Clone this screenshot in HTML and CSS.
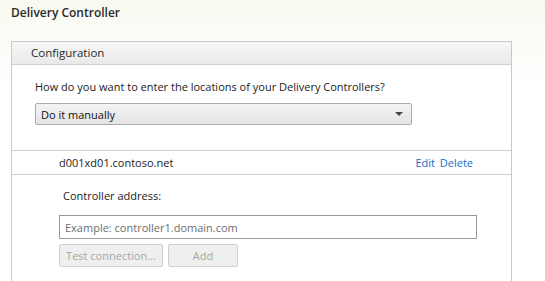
FILE: index.html
```html
<!DOCTYPE html>
<html lang="en">
<head>
  <meta charset="UTF-8">
  <meta name="viewport" content="width=device-width, initial-scale=1.0">
  <title>Delivery Controller</title>
  <link rel="stylesheet" href="styles.css">
</head>
<body>
  <h1 class="page-title">Delivery Controller</h1>

  <div class="panel">
    <div class="panel-header">Configuration</div>

    <div class="panel-body">
      <p class="question">How do you want to enter the locations of your Delivery Controllers?</p>
      <div class="select">
        <span>Do it manually</span>
        <span class="arrow"></span>
      </div>
    </div>

    <!-- Controllers already added -->
    <div class="controller-row">
      <span class="controller-name">d001xd01.contoso.net</span>
      <span class="actions">
        <a href="#">Edit</a>
        <a href="#">Delete</a>
      </span>
    </div>

    <div class="add-form">
      <label for="address">Controller address:</label>
      <input type="text" id="address" placeholder="Example: controller1.domain.com">
      <div class="buttons">
        <button class="btn btn-test" disabled>Test connection...</button>
        <button class="btn btn-add" disabled>Add</button>
      </div>
    </div>
  </div>
</body>
</html>
```

FILE: styles.css
```css
body {
  margin: 0;
  padding: 0;
  height: 281px;
  overflow: hidden;
  font-family: "Open Sans", "Noto Sans", sans-serif;
  font-size: 11px;
  color: #222;
  background: linear-gradient(to bottom, #f8faf1 0px, #fbfcf7 40px, #ffffff 90px);
}
.page-title {
  margin: 0;
  padding: 4px 0 0 11px;
  height: 37px;
  font-size: 12px;
  font-weight: 600;
  line-height: 18px;
  color: #2a2a2a;
}
.panel {
  margin-left: 11px;
  width: 499px;
  height: 240px;
  border: 1px solid #c9c9c9;
  border-bottom: none;
  background-color: white;
}
.panel-header {
  height: 22px;
  line-height: 22px;
  padding-left: 19px;
  font-size: 11.5px;
  color: #2a2a2a;
  background: linear-gradient(to bottom, #f6f6f6, #e9e9e9);
  border-bottom: 1px solid #cfcfcf;
}
.panel-body {
  padding: 14px 0 25px 23px;
  border-bottom: 1px solid #cfcfcf;
}
.question {
  margin: 0 0 8px 0;
  line-height: 16px;
}
.select {
  display: flex;
  justify-content: space-between;
  align-items: center;
  box-sizing: border-box;
  width: 377px;
  height: 22px;
  padding: 0 8px 0 5px;
  border: 1px solid #acacac;
  border-radius: 2px;
  background: linear-gradient(to bottom, #f4f4f4, #e4e4e4);
  color: #111;
}
.arrow {
  width: 0;
  height: 0;
  border-left: 4px solid transparent;
  border-right: 4px solid transparent;
  border-top: 4px solid #444;
}
.controller-row {
  display: flex;
  justify-content: space-between;
  align-items: center;
  height: 23px;
  padding: 0 38px 0 47px;
  border-bottom: 1px solid #cfcfcf;
}
.controller-name {
  color: #222;
}
.actions a {
  color: #1a6ccc;
  text-decoration: none;
  margin-left: 2px;
}
.add-form {
  display: flex;
  flex-direction: column;
  padding: 13px 0 0 47px;
}
.add-form label {
  padding-left: 4px;
  line-height: 16px;
  margin-bottom: 11px;
}
.add-form input {
  box-sizing: border-box;
  width: 418px;
  height: 24px;
  padding: 0 5px;
  border: 1px solid #9a9a9a;
  font-family: inherit;
  font-size: 11px;
  color: #222;
  outline: none;
}
.add-form input::placeholder {
  color: #6e6e6e;
}
.buttons {
  display: flex;
  gap: 5px;
  margin-top: 5px;
}
.btn {
  box-sizing: border-box;
  height: 23px;
  padding: 0;
  border: 1px solid #d0d0d0;
  border-radius: 2px;
  background-color: #efefef;
  color: #a6a6a6;
  font-family: inherit;
  font-size: 11px;
}
.btn-test {
  width: 104px;
}
.btn-add {
  width: 70px;
}
```
